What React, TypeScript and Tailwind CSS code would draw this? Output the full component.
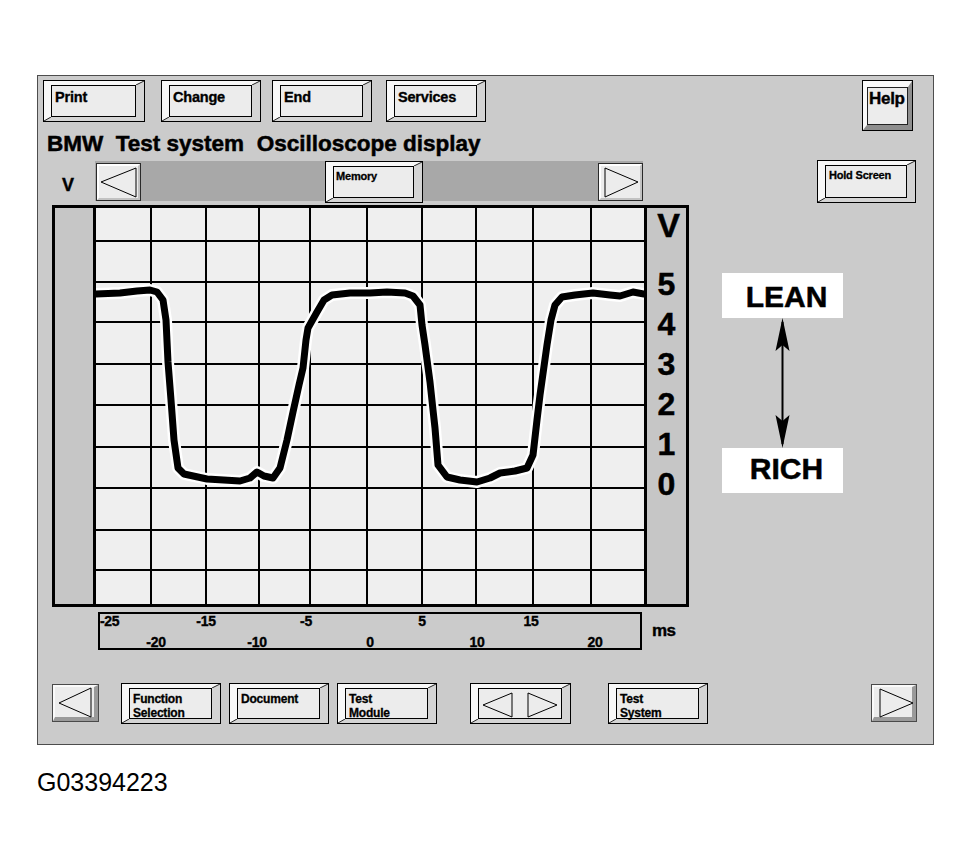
import React from "react";

type Props = { className?: string; children?: React.ReactNode };

// Raised push button: black outline, bevelled faces, inset black-edged face.
function Raised({ className = "", children }: Props) {
  return (
    <div className={`relative flex shrink-0 border border-black ${className}`}>
      <div className="flex flex-1 border-t-[4px] border-l-[7px] border-r-[8px] border-b-[4px] border-t-[#f8f8f8] border-l-[#f8f8f8] border-r-[#d4d4d4] border-b-[#d4d4d4]">
        <div className="relative flex-1 border border-black bg-[#ececec]">{children}</div>
      </div>
      <svg className="absolute right-0 top-0 h-[4px] w-[8px]" viewBox="0 0 8 4">
        <line x1="8" y1="0" x2="0" y2="4" stroke="#222" strokeWidth="1" />
      </svg>
      <svg className="absolute bottom-0 left-0 h-[4px] w-[7px]" viewBox="0 0 7 4">
        <line x1="0" y1="4" x2="7" y2="0" stroke="#222" strokeWidth="1" />
      </svg>
    </div>
  );
}

function TopLabel({ children }: Props) {
  return (
    <div className="px-[3px] pt-[3px] text-[14.5px] font-bold leading-[16px] tracking-[-0.2px] [-webkit-text-stroke:0.35px_#000]">
      {children}
    </div>
  );
}

function SmallLabel({ children }: Props) {
  return (
    <div className="pl-[2px] pt-[3px] text-[11px] font-bold leading-[13px] tracking-[-0.2px] [-webkit-text-stroke:0.3px_#000]">
      {children}
    </div>
  );
}

function TwoLine({ children }: Props) {
  return (
    <div className="pl-[3px] pt-[3px] text-[12px] font-bold leading-[14px] tracking-[-0.2px] [-webkit-text-stroke:0.3px_#000]">
      {children}
    </div>
  );
}

// Thin scroll key used in the memory strip
function StripKey({ className = "", dir }: { className?: string; dir: "left" | "right" }) {
  return (
    <div className={`relative shrink-0 h-[38px] w-[45px] border border-[#2a2a2a] bg-[#ececec] ${className}`}>
      <div className="absolute inset-0 border-t-[2px] border-l-[2px] border-r-[2px] border-b-[2px] border-t-white border-l-white border-r-[#c2c2c2] border-b-[#c2c2c2]" />
      <svg className="absolute left-0 top-0" width="43" height="36" viewBox="0 0 43 36">
        {dir === "left" ? (
          <polygon points="4,18 39,4 39,33" fill="none" stroke="#000" strokeWidth="1" />
        ) : (
          <polygon points="6,4 6,33 39,18" fill="none" stroke="#000" strokeWidth="1" />
        )}
      </svg>
    </div>
  );
}

// Page keys at the ends of the bottom bar
function PageKey({ className = "", dir }: { className?: string; dir: "left" | "right" }) {
  return (
    <div className={`relative shrink-0 h-[38px] border border-[#4a4a4a] bg-[#ececec] ${className}`}>
      <div className="absolute inset-0 border-t-[2px] border-l-[2px] border-r-[4px] border-b-[4px] border-t-[#fafafa] border-l-[#fafafa] border-r-[#9a9a9a] border-b-[#9a9a9a]" />
      <svg className="absolute left-0 top-0" width="46" height="36" viewBox="0 0 46 36">
        {dir === "left" ? (
          <polygon points="6,18 38,3 38,32" fill="none" stroke="#000" strokeWidth="1" />
        ) : (
          <polygon points="8,4 8,32 41,18" fill="none" stroke="#000" strokeWidth="1" />
        )}
      </svg>
    </div>
  );
}

const vLines = [55, 110, 163, 214, 271, 326, 380, 437, 495];
const hLines = [33, 74, 114, 156, 197, 239, 280, 322, 362];

const trace =
  "0,86 24,85 41,83 54,82 61,84 67,92 70,112 72,154 75,192 78,232 82,260 88,266 111,271 144,273 154,270 161,264 168,268 177,270 184,260 191,232 197,204 203,177 207,160 210,132 212,120 221,104 228,92 236,87 254,85 274,85 291,84 309,85 317,88 324,97 326,117 329,137 334,174 337,202 339,220 342,257 351,269 364,272 381,274 394,270 404,265 419,263 431,260 437,247 441,212 444,187 451,137 455,112 459,97 466,89 479,87 497,85 514,87 524,88 537,84 548,86";

const topTicks = [
  { x: 0, t: "-25", left: true },
  { x: 106, t: "-15" },
  { x: 206, t: "-5" },
  { x: 322, t: "5" },
  { x: 431, t: "15" },
];
const bottomTicks = [
  { x: 56, t: "-20" },
  { x: 157, t: "-10" },
  { x: 270, t: "0" },
  { x: 377, t: "10" },
  { x: 495, t: "20" },
];

export default function App() {
  return (
    <div className="h-[866px] w-[974px] overflow-hidden bg-white pl-[37px] pt-[75px] font-['Liberation_Sans',Arial,Helvetica,sans-serif] text-black">
      <div className="flex h-[670px] w-[897px] flex-col border border-[#4d4d4d] bg-[#cbcbcb]">
        {/* command buttons */}
        <div className="flex h-[55px] items-start pl-[5px] pr-[20px] pt-[4px]">
          <Raised className="h-[42px] w-[102px]">
            <TopLabel>Print</TopLabel>
          </Raised>
          <Raised className="ml-[16px] h-[42px] w-[100px]">
            <TopLabel>Change</TopLabel>
          </Raised>
          <Raised className="ml-[11px] h-[42px] w-[100px]">
            <TopLabel>End</TopLabel>
          </Raised>
          <Raised className="ml-[14px] h-[42px] w-[100px]">
            <TopLabel>Services</TopLabel>
          </Raised>
          <div className="ml-auto flex h-[51px] w-[51px] shrink-0 border border-black">
            <div className="flex flex-1 border-t-[6px] border-l-[4px] border-r-[4px] border-b-[5px] border-t-[#fafafa] border-l-[#fafafa] border-r-[#8e8e8e] border-b-[#8e8e8e]">
              <div className="flex-1 border border-[#222] bg-[#ececec] pl-[1px] pt-[2px] text-[17px] font-bold leading-none tracking-[-0.3px] [-webkit-text-stroke:0.4px_#000]">
                Help
              </div>
            </div>
          </div>
        </div>

        {/* title */}
        <div className="h-[29px] whitespace-pre pl-[9px] pt-[2px] text-[22.5px] font-bold leading-none [-webkit-text-stroke:0.5px_#000]">
          BMW  Test system  Oscilloscope display
        </div>

        {/* memory strip */}
        <div className="flex h-[45px] items-start">
          <div className="w-[57px] shrink-0 pl-[24px] pt-[16px] text-[18px] font-bold leading-none [-webkit-text-stroke:0.4px_#000]">V</div>
          <div className="mt-[1px] flex h-[40px] w-[548px] shrink-0 items-start bg-[#a8a8a8]">
            <StripKey className="ml-[1px] mt-[2px]" dir="left" />
            <Raised className="ml-[184px] h-[42px] w-[98px]">
              <SmallLabel>Memory</SmallLabel>
            </Raised>
            <StripKey className="ml-auto mt-[2px]" dir="right" />
          </div>
          <Raised className="ml-[174px] h-[43px] w-[99px]">
            <div className="pl-[3px] pt-[3px] text-[11px] font-bold leading-[13px] tracking-[-0.2px] [-webkit-text-stroke:0.3px_#000]">
              Hold Screen
            </div>
          </Raised>
        </div>

        {/* scope display */}
        <div className="flex h-[402px] items-start pl-[14px]">
          <div className="flex h-[402px] w-[637px] shrink-0 border-[3px] border-black">
            <div className="w-[38px] bg-[#c6c6c6]" />
            <div className="w-[3px] bg-black" />
            <svg width="548" height="396" viewBox="0 0 548 396" className="block bg-[#efefef]">
              {vLines.map((x) => (
                <line key={`v${x}`} x1={x} y1="0" x2={x} y2="396" stroke="#000" strokeWidth="2" />
              ))}
              {hLines.map((y) => (
                <line key={`h${y}`} x1="0" y1={y} x2="548" y2={y} stroke="#000" strokeWidth="2" />
              ))}
              <polyline points={trace} fill="none" stroke="#fff" strokeWidth="12" strokeLinejoin="round" strokeLinecap="round" />
              <polyline points={trace} fill="none" stroke="#000" strokeWidth="7" strokeLinejoin="round" strokeLinecap="round" />
            </svg>
            <div className="w-[3px] bg-black" />
            <div className="flex w-[39px] flex-col items-center bg-[#c6c6c6] font-bold [-webkit-text-stroke:0.5px_#000]">
              <div className="pl-[4px] text-[34px] leading-none">V</div>
              <div className="mt-[22px] flex flex-col items-center text-[32px] leading-[40px]">
                <span>5</span>
                <span>4</span>
                <span>3</span>
                <span>2</span>
                <span>1</span>
                <span>0</span>
              </div>
            </div>
          </div>

          {/* mixture indicator */}
          <div className="ml-[33px] flex w-[121px] shrink-0 flex-col pt-[68px]">
            <div className="h-[45px] bg-white pl-[8px] pt-[9px] text-center text-[30px] font-bold leading-none [-webkit-text-stroke:0.5px_#000]">
              LEAN
            </div>
            <svg width="121" height="130" viewBox="0 0 121 130" className="block">
              <line x1="60.5" y1="4" x2="60.5" y2="126" stroke="#000" strokeWidth="2" />
              <polygon points="60.5,0 53.5,33 60.5,27 67.5,33" fill="#000" />
              <polygon points="60.5,130 53.5,97 60.5,103 67.5,97" fill="#000" />
            </svg>
            <div className="h-[45px] bg-white pl-[8px] pt-[6px] text-center text-[30px] font-bold leading-none [-webkit-text-stroke:0.5px_#000]">
              RICH
            </div>
          </div>
        </div>

        {/* time axis */}
        <div className="flex h-[43px] items-start pt-[5px]">
          <div className="relative ml-[60px] h-[38px] w-[544px] shrink-0 border-2 border-black text-[14px] font-bold leading-none tracking-[-0.3px] [-webkit-text-stroke:0.35px_#000]">
            {topTicks.map((k) => (
              <span key={k.t} className={`absolute top-0 ${k.left ? "" : "-translate-x-1/2"}`} style={{ left: k.x }}>
                {k.t}
              </span>
            ))}
            {bottomTicks.map((k) => (
              <span key={k.t} className="absolute top-[21px] -translate-x-1/2" style={{ left: k.x }}>
                {k.t}
              </span>
            ))}
          </div>
          <div className="ml-[10px] mt-[10px] text-[17px] font-bold leading-none tracking-[-0.5px] [-webkit-text-stroke:0.4px_#000]">
            ms
          </div>
        </div>

        {/* function keys */}
        <div className="flex items-start pt-[33px]">
          <PageKey className="ml-[14px] mt-[1px] w-[47px]" dir="left" />
          <Raised className="ml-[22px] h-[41px] w-[100px]">
            <TwoLine>
              Function
              <br />
              Selection
            </TwoLine>
          </Raised>
          <Raised className="ml-[8px] h-[41px] w-[100px]">
            <TwoLine>Document</TwoLine>
          </Raised>
          <Raised className="ml-[8px] h-[41px] w-[100px]">
            <TwoLine>
              Test
              <br />
              Module
            </TwoLine>
          </Raised>
          <Raised className="ml-[33px] h-[41px] w-[101px]">
            <svg className="absolute left-0 top-0" width="82" height="29" viewBox="0 0 82 29">
              <polygon points="4,16 33,4 33,28" fill="none" stroke="#000" strokeWidth="1" />
              <polygon points="49,4 49,28 78,16" fill="none" stroke="#000" strokeWidth="1" />
            </svg>
          </Raised>
          <Raised className="ml-[37px] h-[41px] w-[100px]">
            <TwoLine>
              Test
              <br />
              System
            </TwoLine>
          </Raised>
          <PageKey className="ml-[163px] mt-[1px] w-[46px]" dir="right" />
        </div>
      </div>

      <div className="mt-[25px] text-[25px] leading-none">G03394223</div>
    </div>
  );
}
